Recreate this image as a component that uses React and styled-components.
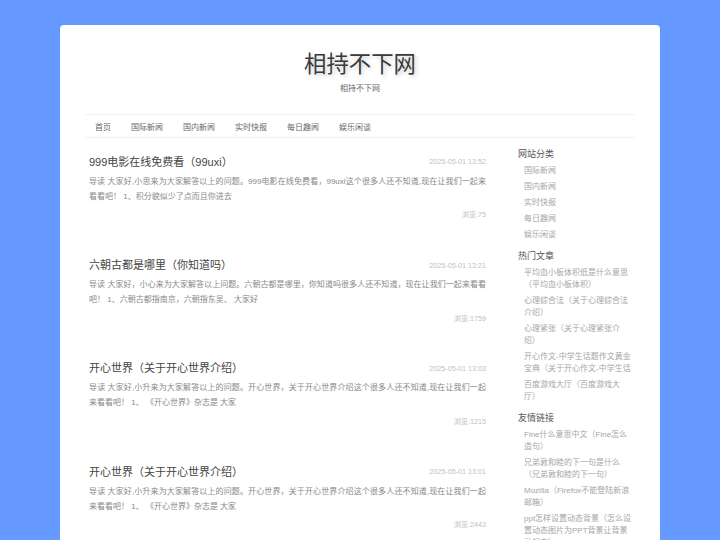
import React from "react";
import styled, { createGlobalStyle } from "styled-components";

const Global = createGlobalStyle`
  html, body { margin: 0; padding: 0; background: #6699ff; }
  body {
    font-family: "Liberation Sans", "Noto Sans CJK SC", sans-serif;
    height: 540px;
    overflow: hidden;
    text-spacing-trim: space-all;
  }
  * { box-sizing: border-box; }
`;
const Page = styled.div`
  padding-top: 25px;
  display: flex;
  justify-content: center;
`;
const Container = styled.div`
  width: 600px;
  background: #fff;
  border-radius: 4px;
  padding: 0 25px;
`;
const Header = styled.header`
  height: 89px;
  padding-top: 25px;
  text-align: center;
`;
const SiteTitle = styled.h1`
  margin: 0;
  font-size: 22.4px;
  line-height: 30px;
  font-weight: 400;
  color: #3a3a3a;
  text-shadow: 2px 2px 4px rgba(0, 0, 0, 0.2);
`;
const SiteSub = styled.div`
  margin-top: 3px;
  font-size: 8px;
  line-height: 12px;
  color: #666;
`;
const Nav = styled.nav`
  height: 24px;
  display: flex;
  align-items: center;
  gap: 20px;
  padding: 0 10px;
  border-top: 1px solid #f2f2f2;
  border-bottom: 1px solid #f2f2f2;
`;
const NavLink = styled.a`
  font-size: 8px;
  color: #666;
`;
const Columns = styled.div`
  display: flex;
  padding-left: 4px;
`;
const Main = styled.main`
  width: 397px;
  padding-top: 15.7px;
`;
const Article = styled.article`
  height: 103.4px;
`;
const TitleRow = styled.div`
  display: flex;
  justify-content: space-between;
  align-items: center;
  height: 16px;
`;
const ArticleTitle = styled.h2`
  margin: 0;
  font-size: 11px;
  line-height: 16px;
  font-weight: 400;
  color: #444;
`;
const Stamp = styled.span`
  font-size: 7.2px;
  color: #c0c0c0;
`;
const Excerpt = styled.p`
  margin: 4px 0 0;
  font-size: 8px;
  line-height: 15px;
  color: #888;
  text-align: justify;
`;
const Views = styled.div`
  margin-top: 5.5px;
  text-align: right;
  font-size: 7.2px;
  line-height: 12px;
  color: #c0c0c0;
`;
const Side = styled.aside`
  width: 114px;
  margin-left: 32px;
  padding-top: 10px;
`;
const SideTitle = styled.h3`
  margin: 0 0 4.5px;
  font-size: 9px;
  line-height: 12px;
  font-weight: 400;
  color: #555;
`;
const SideList = styled.ul`
  list-style: none;
  margin: 0 0 9.5px;
  padding: 0 0 0 6px;
`;
const SideItem = styled.li`
  margin-bottom: 4px;
  font-size: 8px;
  line-height: 12px;
  color: #a6a6a6;
`;

const navs = ["首页", "国际新闻", "国内新闻", "实时快报", "每日趣闻", "娱乐闲谈"];
const articles = [
  ["999电影在线免费看（99uxi）", "2025-05-01 13:52", "导读 大家好,小思来为大家解答以上的问题。999电影在线免费看，99uxi这个很多人还不知道,现在让我们一起来看看吧！ 1、积分貌似少了点而且你进去", "浏览:75"],
  ["六朝古都是哪里（你知道吗）", "2025-05-01 13:21", "导读 大家好，小心来为大家解答以上问题。六朝古都是哪里，你知道吗很多人还不知道，现在让我们一起来看看吧！ 1、六朝古都指南京，六朝指东吴、 大家好", "浏览:1759"],
  ["开心世界（关于开心世界介绍）", "2025-05-01 13:03", "导读 大家好,小升来为大家解答以上的问题。开心世界，关于开心世界介绍这个很多人还不知道,现在让我们一起来看看吧！ 1、 《开心世界》杂志是 大家", "浏览:1215"],
  ["开心世界（关于开心世界介绍）", "2025-05-01 13:01", "导读 大家好,小升来为大家解答以上的问题。开心世界，关于开心世界介绍这个很多人还不知道,现在让我们一起来看看吧！ 1、 《开心世界》杂志是 大家", "浏览:2443"],
];
const cats = navs.slice(1);
const hot = [
  "平均血小板体积低是什么意思（平均血小板体积）",
  "心理综合法（关于心理综合法介绍）",
  "心理紧张（关于心理紧张介绍）",
  "开心作文-中学生话题作文黄金宝典（关于开心作文-中学生话",
  "百度游戏大厅（百度游戏大厅）",
];
const links = [
  "Fine什么意思中文（Fine怎么造句）",
  "兄弟敦和睦的下一句是什么（兄弟敦和睦的下一句）",
  "Mozilla（Firefox不能登陆新浪邮箱）",
  "ppt怎样设置动态背景（怎么设置动态图片为PPT背景让背景动起来）",
];

export default function App() {
  return (
    <Page>
      <Global />
      <Container>
        <Header>
          <SiteTitle>相持不下网</SiteTitle>
          <SiteSub>相持不下网</SiteSub>
        </Header>
        <Nav>
          {navs.map((n) => <NavLink key={n}>{n}</NavLink>)}
        </Nav>
        <Columns>
          <Main>
            {articles.map((a, i) => (
              <Article key={i}>
                <TitleRow>
                  <ArticleTitle>{a[0]}</ArticleTitle>
                  <Stamp>{a[1]}</Stamp>
                </TitleRow>
                <Excerpt>{a[2]}</Excerpt>
                <Views>{a[3]}</Views>
              </Article>
            ))}
          </Main>
          <Side>
            <SideTitle>网站分类</SideTitle>
            <SideList>
              {cats.map((c) => <SideItem key={c}>{c}</SideItem>)}
            </SideList>
            <SideTitle>热门文章</SideTitle>
            <SideList>
              {hot.map((c) => <SideItem key={c}>{c}</SideItem>)}
            </SideList>
            <SideTitle>友情链接</SideTitle>
            <SideList>
              {links.map((c) => <SideItem key={c}>{c}</SideItem>)}
            </SideList>
          </Side>
        </Columns>
      </Container>
    </Page>
  );
}
